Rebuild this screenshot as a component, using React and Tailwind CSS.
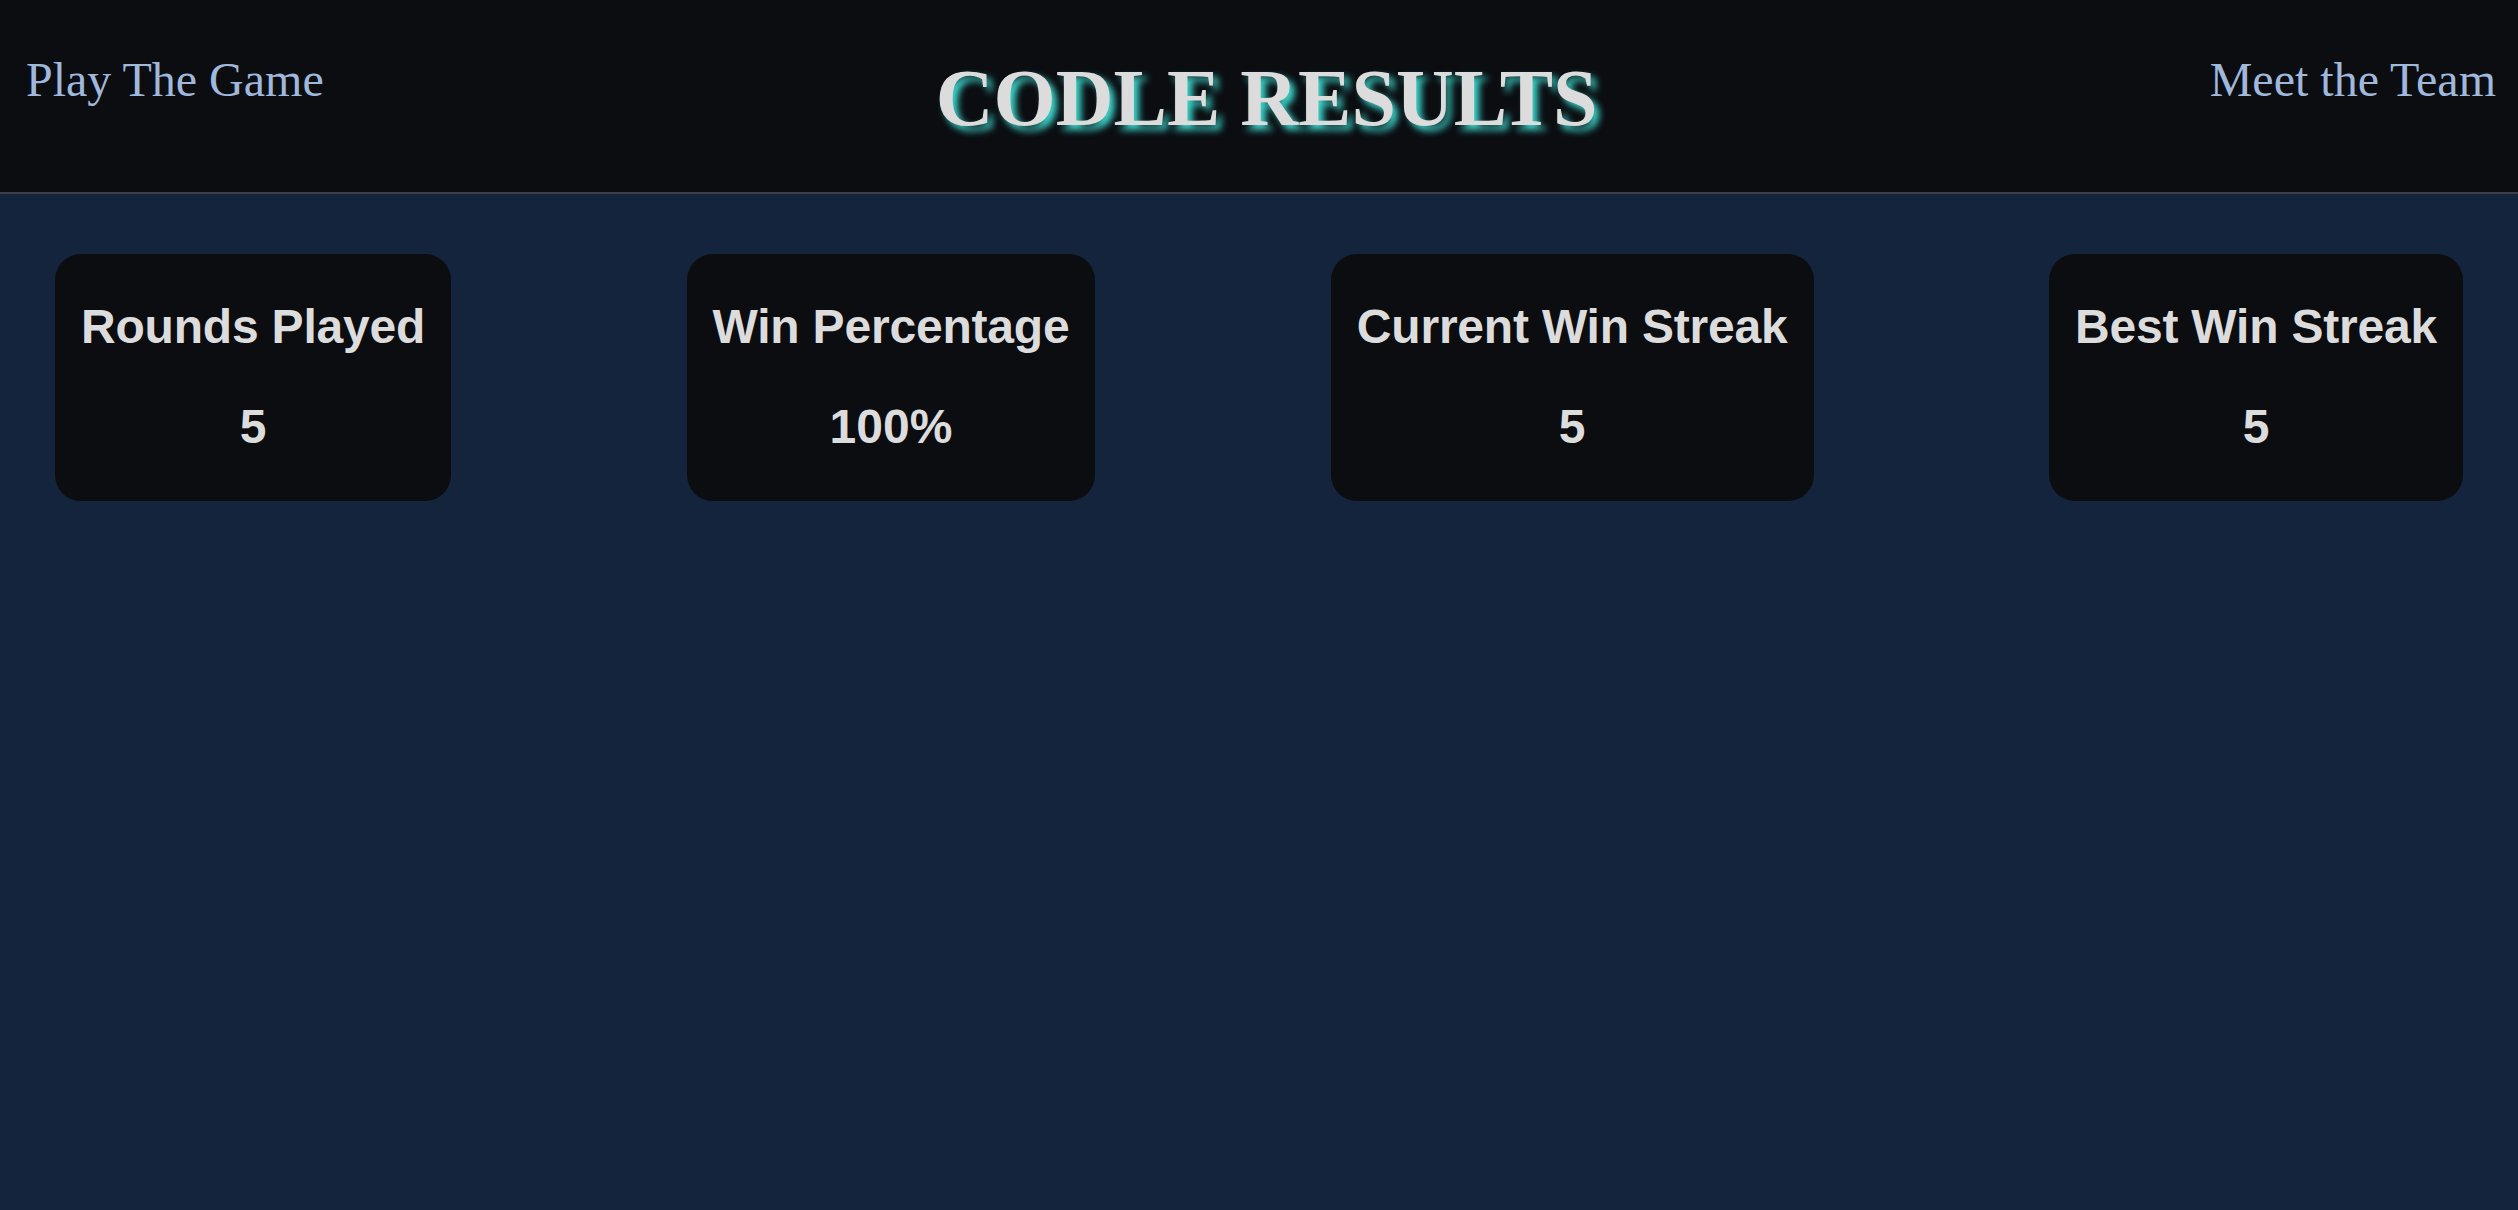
const stats = [
  { label: "Rounds Played", value: "5" },
  { label: "Win Percentage", value: "100%" },
  { label: "Current Win Streak", value: "5" },
  { label: "Best Win Streak", value: "5" },
];

const StatCard = ({ label, value }) => (
  <div className="flex flex-col items-center gap-[52px] rounded-[26px] bg-[#0b0d11] px-[26px] pt-[49px] pb-[50px] text-[#dcdcdc] font-['Liberation_Sans',Arial,sans-serif] font-bold">
    <h2 className="text-[48px] leading-[48px] tracking-[-0.2px] whitespace-nowrap">{label}</h2>
    <p className="text-[48px] leading-[48px]">{value}</p>
  </div>
);

export default function App() {
  return (
    <div className="min-h-screen bg-[#14243d]">
      <header className="flex h-[194px] items-start justify-between border-b-2 border-[#3d3f44] bg-[#0b0d11] pt-[56px] pl-[26px] pr-[22px] font-['Liberation_Serif','Times_New_Roman',serif]">
        <a href="#" className="text-[48px] leading-[48px] text-[#a0b8db]">
          Play The Game
        </a>
        <h1 className="mt-[2px] text-[80px] leading-[80px] font-bold text-[#dcdcdc] [text-shadow:5px_5px_7px_#3fd9cf]">
          CODLE RESULTS
        </h1>
        <a href="#" className="text-[48px] leading-[48px] text-[#a0b8db]">
          Meet the Team
        </a>
      </header>
      <main className="flex items-start justify-between px-[55px] pt-[60px]">
        {stats.map((s) => (
          <StatCard key={s.label} {...s} />
        ))}
      </main>
    </div>
  );
}
